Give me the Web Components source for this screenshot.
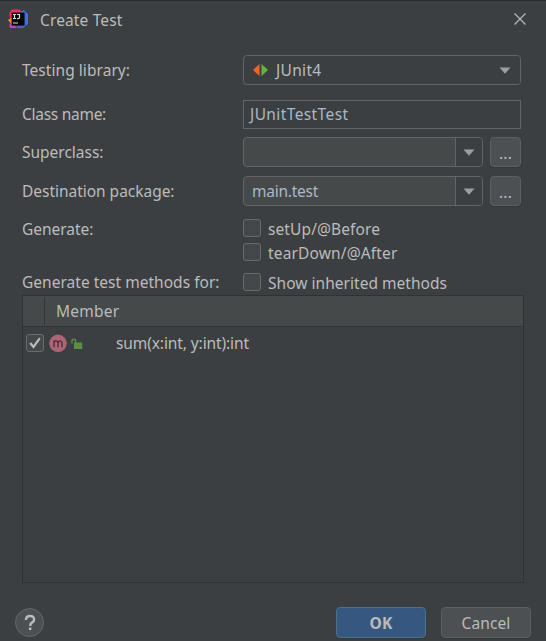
<!DOCTYPE html>
<html lang="en"><head><meta charset="utf-8"><title>Create Test</title>
<style>html,body{margin:0;height:100%;overflow:hidden;background:#3c3f41}</style></head><body>
<create-test-dialog></create-test-dialog>
<script>
const define=(name,html,after)=>customElements.define(name,class extends HTMLElement{
  connectedCallback(){
    if(this.shadowRoot)return;
    this.attachShadow({mode:'open'}).innerHTML=html;
    if(after)after(this,this.shadowRoot);
  }
});

/* One line of text; the "w" attribute is its advance width in pixels. */
define('ui-text',`<style>:host{display:inline-block;white-space:nowrap;line-height:22px;flex:none}span{display:inline-block}</style><span><slot></slot></span>`,
(el,root)=>{
  const w=+el.getAttribute('w'),s=root.querySelector('span');
  if(w){const n=el.textContent.length;s.style.letterSpacing=((w-s.getBoundingClientRect().width)/n)+'px';}
});

define('ui-check',`<style>:host{display:flex;align-items:center;gap:7px;height:18px}
i{box-sizing:border-box;width:18px;height:18px;border:1px solid #6b6b6b;border-radius:3px;background:#43494a;display:block;flex:none}
svg{display:none;margin:-1px}:host([checked]) svg{display:block}::slotted(*){margin-top:2px}</style>
<i><svg width="18" height="18" viewBox="0 0 18 18"><path d="M4.2 9l3.3 4L13.8 4.2" fill="none" stroke="#bbb" stroke-width="2.2"/></svg></i><slot></slot>`);

define('ui-combo',`<style>:host{display:flex;box-sizing:border-box;height:30px;width:240px;border:1px solid #646464;border-radius:4px;background:#45494a;overflow:hidden;color:#bbb}
:host([plain]){width:278px;background:#3c3f41}
.v{flex:1;display:flex;align-items:center;padding-left:8px}
:host([plain]) .v{padding-left:9px}
.a{width:26px;display:flex;align-items:center;justify-content:center;background:#3c3f41;border-left:1px solid #646464}
:host([plain]) .a{border:0;padding-right:2px}</style>
<div class="v"><slot></slot></div><div class="a"><svg width="12" height="7" viewBox="0 0 12 7"><path d="M.5.5h11L6 6.7z" fill="#9b9fa1"/></svg></div>`);

define('ui-field',`<style>:host{display:flex;align-items:center;box-sizing:border-box;width:278px;height:29px;border:1px solid #646464;padding-left:6px;color:#a9b7c6}</style><slot></slot>`);

define('ui-button',`<style>:host{display:flex;align-items:center;justify-content:center;box-sizing:border-box;width:90px;height:31px;border:1px solid #5e6060;border-radius:4px;background:#4c5052;box-shadow:0 1px 1px #35383a}
:host([primary]){background:#365880;border-color:#4c708c;font-weight:bold}
:host([small]){width:31px;height:30px}</style><slot></slot>`);

define('ui-dots',`<style>:host{display:block;padding-top:2px;line-height:20px;letter-spacing:.2px}</style><slot></slot>`);

define('ui-row',`<style>:host{display:flex;align-items:center;height:30px}.l{width:221px;flex:none;display:flex}.c{display:flex;gap:7px;align-items:center}</style>
<div class="l"><slot name="label"></slot></div><div class="c"><slot></slot></div>`);

define('title-bar',`<style>:host{display:flex;align-items:center;height:38px;border-top:1px solid #2b2b2b;padding:0 20px 0 8px}
.logo{margin-right:12px;margin-top:-2px;flex:none}.x{margin-left:auto;flex:none;margin-top:-2px}</style>
<svg class="logo" width="20" height="20" viewBox="0 0 20 20">
<path d="M1 5L3.500.5h8L14 3 10 17l-8.500 1L3 12z" fill="#f02a62"/><path d="M0 11l4-3v8z" fill="#f78a20"/><path d="M1.500 15l4-1 3 5H2z" fill="#b846c8"/><path d="M12 3l3.500-2L20 5v10l-5 4H8l4-4z" fill="#3d70dc"/><path d="M9 17l6-1-2 3.500z" fill="#6c4ddb"/>
<path d="M3.600 3.600h13v13h-13z" fill="#050505"/><path d="M5 5.500h3M6.500 5.500v4M5 9.500h3M9 5.500h2.500v3q0 1.200-1.500 1.200H9M5 14h5" fill="none" stroke="#ddd" stroke-width="1.200"/></svg>
<slot></slot><svg class="x" width="12" height="12" viewBox="0 0 12 12"><path d="M.5.5l11 11m0-11l-11 11" stroke="#b8babb" stroke-width="1.2"/></svg>`);

define('member-table',`<style>:host{display:block;box-sizing:border-box;width:502px;height:288px;border:1px solid #303233}
.h{height:30px;border-bottom:1px solid #323537;background:#45494a;display:flex;align-items:center}
.g{width:21px;height:28px;border-right:1px solid #323537;margin-right:11px}
.r{display:flex;align-items:center;height:32px;padding-left:3px}
.m{margin-left:5px;flex:none}.u{margin:2px 33px 0 4px;flex:none}</style>
<div class="h"><div class="g"></div><ui-text w="63.500">Member</ui-text></div>
<div class="r"><ui-check checked></ui-check>
<svg class="m" width="18" height="18" viewBox="0 0 18 18"><circle cx="9" cy="9.300" r="8.700" fill="#ad6575"/><path d="M5 13.300V6.500M5 8.800Q5.300 6.900 7 6.900T9 8.900V13.300M9 8.900Q9.300 6.900 11 6.900T13 8.900V13.300" fill="none" stroke="#41292f" stroke-width="1.200"/></svg>
<svg class="u" width="12" height="12" viewBox="0 0 12 12"><path d="M3 4.500h8.200V11H3z" fill="#569040"/><path d="M1 5.500V3Q1 1.200 2.800 1.200T4.700 3v2" fill="none" stroke="#569040" stroke-width="1.400"/></svg>
<ui-text w="133">sum(x:int, y:int):int</ui-text></div>`);

define('help-button',`<style>:host{display:block;width:30px;height:30px}svg{display:block}</style>
<svg width="30" height="30" viewBox="0 0 30 30"><circle cx="14.500" cy="14.500" r="14" fill="#4c5052" stroke="#66696a"/><path d="M10.900 12Q11 8 15 8T19.100 11.500Q19.100 13.300 17.200 14.400T15.200 18" fill="none" stroke="#bbb" stroke-width="2.400"/><path d="M13.900 19.500h2.500v2.500h-2.500z" fill="#bbb"/></svg>`);

define('create-test-dialog',`<style>
:host{display:flex;flex-direction:column;box-sizing:border-box;width:546px;height:641px;background:#3c3f41;color:#bbb;font:15.500px "Noto Sans","Open Sans",sans-serif}
main{padding:16px 0 0 22px;flex:1}
ui-text[slot=label]{margin-top:-1px}
.r2{margin-top:15px;height:29px}.r3{margin-top:8px}.r4{margin-top:9px}
.r5{margin-top:13px;height:18px}.r6{margin-top:6px;height:18px}.r7{margin-top:12px;height:18px}
.r5 [slot=label]{margin-top:1px}
member-table{margin-top:4px}.ic{margin-right:8px;flex:none}.val{color:#a9b7c6}.val,.ic+ui-text{margin-top:-1px}
ui-field ui-text{margin-top:-1px}
footer{display:flex;align-items:center;height:31px;padding:0 15px 3px;gap:15px}help-button{margin-right:auto}
</style>
<title-bar><ui-text w="82.500">Create Test</ui-text></title-bar>
<main>
<ui-row><ui-text slot="label" w="108">Testing library:</ui-text><ui-combo plain><svg class="ic" width="15" height="12" viewBox="0 0 15 12"><path d="M6.500 0v12L0 6z" fill="#f26522"/><path d="M8.500 0v12L15 6z" fill="#62b543"/></svg><ui-text w="45.500">JUnit4</ui-text></ui-combo></ui-row>
<ui-row class="r2"><ui-text slot="label" w="84">Class name:</ui-text><ui-field><ui-text w="98.500">JUnitTestTest</ui-text></ui-field></ui-row>
<ui-row class="r3"><ui-text slot="label" w="81.500">Superclass:</ui-text><ui-combo></ui-combo><ui-button small><ui-dots>...</ui-dots></ui-button></ui-row>
<ui-row class="r4"><ui-text slot="label" w="152.500">Destination package:</ui-text><ui-combo><ui-text class="val" w="66">main.test</ui-text></ui-combo><ui-button small><ui-dots>...</ui-dots></ui-button></ui-row>
<ui-row class="r5"><ui-text slot="label" w="71.500">Generate:</ui-text><ui-check><ui-text w="112">setUp/@Before</ui-text></ui-check></ui-row>
<ui-row class="r6"><ui-check><ui-text w="129.500">tearDown/@After</ui-text></ui-check></ui-row>
<ui-row class="r7"><ui-text slot="label" w="197.500">Generate test methods for:</ui-text><ui-check><ui-text w="179">Show inherited methods</ui-text></ui-check></ui-row>
<member-table></member-table>
</main>
<footer><help-button></help-button><ui-button primary><ui-text w="23">OK</ui-text></ui-button><ui-button><ui-text w="49">Cancel</ui-text></ui-button></footer>`);
</script></body></html>
